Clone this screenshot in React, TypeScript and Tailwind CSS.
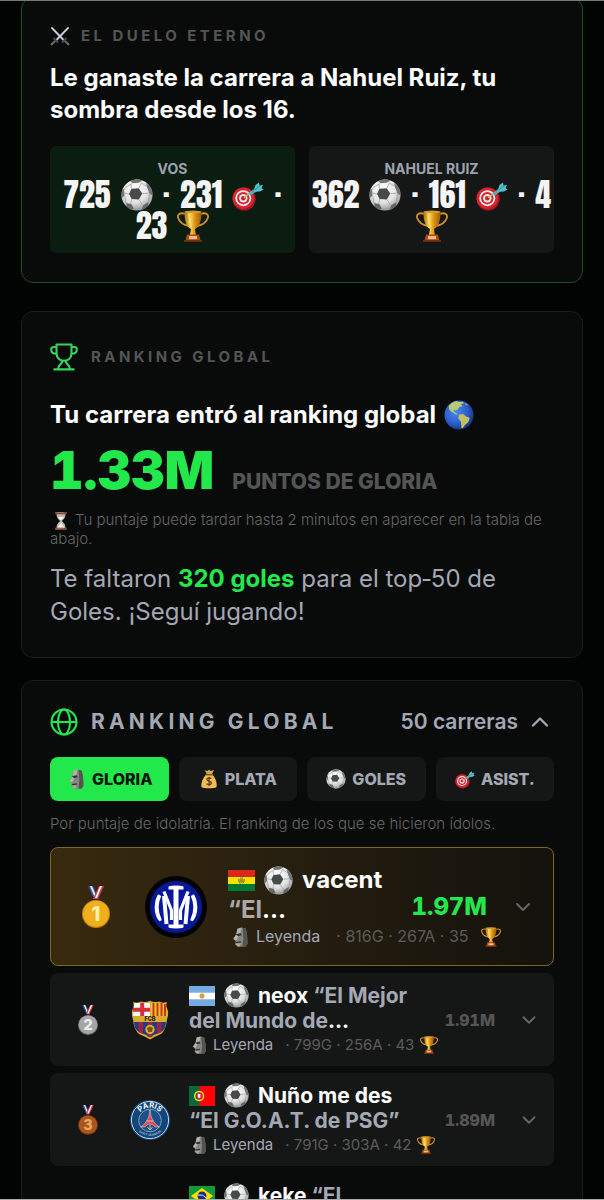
import { useId, useState, type ReactNode } from "react";
import { ChevronDown, ChevronUp } from "lucide-react";

type IconProps = { className?: string };

function Ball({ className = "" }: IconProps) {
  const id = useId();
  return (
    <svg viewBox="0 0 32 32" className={`inline-block shrink-0 ${className}`} role="img" aria-label="Goles">
      <defs>
        <radialGradient id={`${id}g`} cx="0.42" cy="0.3" r="0.75">
          <stop offset="0" stopColor="#ffffff" />
          <stop offset="0.6" stopColor="#e2e2e2" />
          <stop offset="1" stopColor="#8d8d8d" />
        </radialGradient>
        <clipPath id={`${id}c`}>
          <circle cx="16" cy="16" r="15.5" />
        </clipPath>
      </defs>
      <circle cx="16" cy="16" r="15.5" fill={`url(#${id}g)`} />
      <g clipPath={`url(#${id}c)`}>
        <path d="M10.500 9.800l7.200-.6 3.600 5.400-3.400 5.800-7.200-.4-2.700-5z" fill="#47494b" />
        <g fill="#707274">
          <path d="M9 1.500l8-2 5 2-4.500 2.300-6 .5z" />
          <path d="M25 4l7 5v8l-3.500-2.500L26 8z" />
          <path d="M0 9l3 1.500.5 6L0 20z" />
          <path d="M5 24l5.500 1.200L13 30l-6 2z" fill="#666" />
          <path d="M22 26.500l5.500-3.500-1 6-6 2.500z" fill="#666" />
        </g>
        <path
          d="M10.500 9.800L10 5M17.700 9.200L20.500 4M21.300 14.600l7-.5M17.900 20.400l4 6.100M10.700 20l-1 5M8 15l-4.500-1M20.500 4l5.500 3.500M11 4.500L5 8l-2 3M3.500 16.500L5 24M13 30l8-.5M28.500 15l-1 8"
          fill="none"
          stroke="#9a9a9a"
          strokeWidth="0.7"
        />
      </g>
    </svg>
  );
}

function Target({ className = "" }: IconProps) {
  return (
    <svg viewBox="0 0 32 32" className={`inline-block shrink-0 ${className}`} role="img" aria-label="Asistencias">
      <circle cx="12.200" cy="20" r="11.500" fill="#9f1620" />
      <circle cx="11.300" cy="19.200" r="10.800" fill="#d9232f" />
      <circle cx="11.300" cy="19.200" r="8" fill="#f3e9e8" />
      <circle cx="11.300" cy="19.200" r="6.200" fill="#d22733" />
      <circle cx="11.300" cy="19.200" r="4.200" fill="#f3e9e8" />
      <circle cx="11.300" cy="19.200" r="2.300" fill="#c92430" />
      <path d="M12 18.600l8-6" stroke="#d7b35a" strokeWidth="1.600" />
      <path d="M16.500 14.500l7.500-6 2 3-7.500 5z" fill="#3fb3c2" />
      <path d="M22 10.500L23.500 6l3.500-2.500.5 3 3.500-.6-1.500 3 2 1.600-3.500 2-5.500.3z" fill="#55c0cb" />
      <path d="M22.500 11l6-4.500" stroke="#23808f" strokeWidth="0.8" />
    </svg>
  );
}

function Cup({ className = "" }: IconProps) {
  const id = useId();
  return (
    <svg viewBox="0 0 32 32" className={`inline-block shrink-0 ${className}`} role="img" aria-label="Trofeos">
      <defs>
        <linearGradient id={id} x1="0" x2="1" y1="0" y2="0">
          <stop offset="0" stopColor="#b26e0a" />
          <stop offset="0.35" stopColor="#ffd54f" />
          <stop offset="0.6" stopColor="#dd9416" />
          <stop offset="1" stopColor="#9c5a06" />
        </linearGradient>
      </defs>
      <path d="M8.500 4C3 2 0 4.500 1.200 8c1.200 4 5.500 7 11 8M23.500 4c5.500-2 8.500.500 7.300 4-1.200 4-5.500 7-11 8" fill="none" stroke="#cf8f28" strokeWidth="1.800" />
      <path d="M7.500 1.500h17c.2 9-2 15.500-6.500 17.500l1 6h-6l1-6C9.500 17 7.300 10.500 7.500 1.500z" fill={`url(#${id})`} />
      <ellipse cx="16" cy="1.800" rx="8.500" ry="1.300" fill="#d99a2f" />
      <path d="M12 3.500c0 6 .8 10 2.500 13" stroke="#ffe98a" strokeWidth="1" fill="none" />
      <path d="M10 24.500h12l1.500 6h-15z" fill="#a94d12" />
      <path d="M7 30h18v1.800H7z" fill="#753008" />
      <rect x="12" y="26" width="8" height="3.200" fill="#f3b78b" />
    </svg>
  );
}

function Moai({ className = "" }: IconProps) {
  return (
    <svg viewBox="0 0 20 24" className={`inline-block shrink-0 ${className}`} role="img" aria-label="Gloria">
      <path d="M7 2l5-1.500L17 2l1.500 8 .5 10-2 3.500-9 .3L4 21l1-3.500L2 14l3-5z" fill="#858683" />
      <path d="M13 1l4 1 1.500 8 .5 10-2 3.500-4 .2 1-10z" fill="#53544f" />
      <path d="M7 2l5-1.500L10.500 7 6 8z" fill="#b2b2ac" />
      <path d="M5 9l6-1.500 1 2.500-5 1z" fill="#30312f" />
      <path d="M5.500 9.500L2 14.500l3.500 1.300L8 11z" fill="#b8b8b3" />
      <path d="M5 18l6-1 .5 1.500-6 1z" fill="#353633" />
      <path d="M4.500 20l6-.5-.5 3.500-3 .5z" fill="#a8a8a3" />
    </svg>
  );
}

function MoneyBag({ className = "" }: IconProps) {
  return (
    <svg viewBox="0 0 20 24" className={`inline-block shrink-0 ${className}`} aria-hidden="true">
      <path d="M5 1.500l3 1 2-1.500 2.500 1.500L16 1l-2.500 5.500h-6z" fill="#d7a44c" />
      <path d="M6.500 7h7.500c3.500 3 6 10 5 14.500-.5 2-17.500 2-18 0C0 17 3 10 6.500 7z" fill="#edbc55" />
      <path d="M6 6h9v1.800H6z" fill="#8a5722" />
      <path d="M13 11.500c-2-1.500-5.500-1-5.500 1.200 0 2.600 5.500 1.500 5.500 4.200 0 2.200-4 2.600-6 .8M10.200 9.500v11" fill="none" stroke="#5d3a0e" strokeWidth="1.500" />
    </svg>
  );
}

function Swords({ className = "" }: IconProps) {
  return (
    <svg viewBox="0 0 20 20" className={`inline-block shrink-0 ${className}`} aria-hidden="true">
      <path d="M1.500 1.500L14.500 15M18.500 1.500L5.500 15" stroke="#a4a6b4" strokeWidth="2.200" />
      <path d="M1.500 1.500L14.500 15M18.500 1.500L5.500 15" stroke="#eceef5" strokeWidth="0.900" />
      <path d="M3.500 12l4.500 4.500M16.500 12l-4.500 4.500" stroke="#4b4c52" strokeWidth="1.800" />
      <path d="M5 15l-4 4M15 15l4 4" stroke="#66676d" strokeWidth="2.200" />
    </svg>
  );
}

function Earth({ className = "" }: IconProps) {
  const id = useId();
  return (
    <svg viewBox="0 0 32 32" className={`inline-block shrink-0 ${className}`} aria-hidden="true">
      <defs>
        <radialGradient id={id} cx="0.4" cy="0.4" r="0.65">
          <stop offset="0" stopColor="#4b86ee" />
          <stop offset="0.6" stopColor="#2c5fcf" />
          <stop offset="1" stopColor="#173278" />
        </radialGradient>
      </defs>
      <circle cx="16" cy="16" r="15.500" fill={`url(#${id})`} />
      <path d="M5 6.500C7 3.500 10 1.800 13 1l3 1 4-.2 1.500 1.700-3.500.8 2 2.400-3.500.8-2 2.500-2.500 1.300-1-1-.8 1.700 3 2 1.800 1.400-2.500-.2-4.500-2.700L5.500 10z" fill="#b8cb74" />
      <path d="M16 15.500l4.500-.5 3 2.500 4 1.500-1.500 4.500-3.500 3-2.500 3.500-1.500-.5-.3-6-3-4z" fill="#c5bf5f" />
      <path d="M22 2.800l4 2.500-2.500.2z" fill="#a9c27a" />
    </svg>
  );
}

function Hourglass({ className = "" }: IconProps) {
  return (
    <svg viewBox="0 0 16 20" className={`inline-block shrink-0 ${className}`} aria-hidden="true">
      <path d="M3 2h10c0 4-1.500 6-4 8 2.500 2 4 4 4 8H3c0-4 1.500-6 4-8-2.500-2-4-4-4-8z" fill="#b9b5b2" />
      <path d="M4.500 5.500h7L8.500 9h-1zM8 11.500l4.500 6.500h-9z" fill="#fff3e6" />
      <path d="M1.500 0h13v2.600h-13zM1.500 17.400h13V20h-13z" fill="#7a4a38" />
      <path d="M3 .6h8M3 18h8" stroke="#b98471" strokeWidth="0.800" />
    </svg>
  );
}

function Medal({ place, className = "" }: { place: number; className?: string }) {
  const tones = [
    ["#f0b01c", "#c47f05", "#fff0a8"],
    ["#a4a5a7", "#6d6f72", "#ececec"],
    ["#a8551f", "#70310c", "#f0a45e"],
  ][place - 1];
  return (
    <svg viewBox="0 0 28 42" className={`shrink-0 ${className}`} role="img" aria-label={`Puesto ${place}`}>
      <path d="M6 0h5l6 13h-5z" fill="#3656a4" />
      <path d="M8 0h2l5 12h-2z" fill="#e9e9f2" />
      <path d="M22 0h-5l-6 13h5z" fill="#d23a4b" />
      <path d="M20 0h-2l-5 12h2z" fill="#f3f0f3" />
      <circle cx="14" cy="28" r="14" fill={tones[1]} />
      <circle cx="14" cy="27.700" r="13" fill={tones[0]} />
      <text x="14" y="35" textAnchor="middle" fontSize="20" fontWeight="800" fill={tones[2]} className="font-['Inter',sans-serif]">
        {place}
      </text>
    </svg>
  );
}

type Country = "bo" | "ar" | "pt" | "br";

function Flag({ country, className = "" }: { country: Country; className?: string }) {
  return (
    <svg viewBox="0 0 27 20" preserveAspectRatio="none" className={`inline-block shrink-0 ${className}`} role="img" aria-label={country}>
      {country === "bo" && (
        <>
          <path d="M0 0h27v7H0z" fill="#da291c" />
          <path d="M0 6.700h27v7H0z" fill="#f4e400" />
          <path d="M0 13.400h27V20H0z" fill="#007a33" />
          <ellipse cx="13.500" cy="10" rx="2" ry="2.300" fill="#a98a35" />
          <path d="M10.800 8.500q-.500 3 1.500 4.300M16.200 8.500q.500 3-1.500 4.300M12 7l1.500-1.300L15 7" stroke="#6b5b22" fill="none" strokeWidth="0.900" />
        </>
      )}
      {country === "ar" && (
        <>
          <path d="M0 0h27v20H0z" fill="#74acdf" />
          <path d="M0 6.700h27v6.600H0z" fill="#fff" />
          <circle cx="13.500" cy="10" r="2.300" fill="#e3a52c" stroke="#a37022" strokeWidth="0.500" />
        </>
      )}
      {country === "pt" && (
        <>
          <path d="M0 0h27v20H0z" fill="#f00" />
          <path d="M0 0h10.800v20H0z" fill="#046a38" />
          <circle cx="10.500" cy="10" r="4.600" fill="none" stroke="#f3e02c" strokeWidth="1.500" />
          <path d="M8 7h5v4.500q-2.500 4-5 0z" fill="#e8283a" />
          <path d="M9.200 8h2.600v3q-1.300 2-2.600 0z" fill="#fff" />
        </>
      )}
      {country === "br" && (
        <>
          <path d="M0 0h27v20H0z" fill="#109a3a" />
          <path d="M13.500 2L25 10l-11.500 8L2 10z" fill="#fedf00" />
          <circle cx="13.500" cy="10" r="4.600" fill="#1b2a7a" />
          <path d="M9.200 9q5-1 8.500 2.600" stroke="#fff" strokeWidth="0.900" fill="none" />
        </>
      )}
    </svg>
  );
}

function InterCrest({ className = "" }: IconProps) {
  const id = useId();
  return (
    <svg viewBox="0 0 62 62" className={className} role="img" aria-label="Inter">
      <clipPath id={id}>
        <circle cx="31" cy="31" r="22" />
      </clipPath>
      <circle cx="31" cy="31" r="31" fill="#020204" />
      <circle cx="31" cy="31" r="26" fill="#08189a" />
      <g clipPath={`url(#${id})`} fill="none" stroke="#fff">
        <path d="M31 10v42" strokeWidth="5" />
        <path d="M23.500 11.500h15M23.500 50.500h15" strokeWidth="4" />
        <path d="M21.500 48L19 20M40.500 48L43 20" strokeWidth="4" />
        <path d="M19 15.500L26.500 34.500V44M43 15.500L35.500 34.500V44" strokeWidth="3.200" />
        <path d="M14.500 19q-6 12 .5 26M47.500 19q6 12-.5 26" strokeWidth="4" />
      </g>
    </svg>
  );
}

function BarcaCrest({ className = "" }: IconProps) {
  const id = useId();
  return (
    <svg viewBox="0 0 40 40" className={className} role="img" aria-label="Barcelona">
      <clipPath id={id}>
        <path d="M3 2q5 1.500 8-.500 5 1.500 9-.8 4 2.300 9 .8 3 2 8 .5-1.500 4 .500 7.500 1.500 4-.5 10Q36 30 31 34q-6 2.500-11 5.500Q15 36.500 9 34 4 30 3 19.500q-2-6-.5-10Q4.500 6 3 2z" />
      </clipPath>
      <g clipPath={`url(#${id})`}>
        <path d="M0 0h40v40H0z" fill="#d8ad2d" />
        <path d="M4.500 3H20v13H3z" fill="#fff" />
        <path d="M10.200 3h4v13h-4zM3 7.700h17v4H3z" fill="#d52f3c" />
        <path d="M21 3h14.500L37 16H21z" fill="#f2c322" />
        <path d="M22.500 3h2v13h-2zM26.500 3h2v13h-2zM30.500 3h2v13h-2zM34 4h2v12h-2z" fill="#c7342f" />
        <path d="M4 22h32q0 8-6 10.500-5 1.500-10 5-5-3.500-10-5Q4 30 4 22z" fill="#1c3d8c" />
        <path d="M8.500 22H13v12l-4.500-2zM17.800 22h4.500v15h-4.500zM27 22h4.500v10L27 34z" fill="#a3213f" />
        <circle cx="20" cy="29.500" r="4.700" fill="#e0a927" />
        <path d="M17 28l3-1.500 3 1.500-1.200 4h-3.600z" fill="#73551b" />
      </g>
      <text x="20" y="21" textAnchor="middle" fontSize="5.500" fontWeight="800" fill="#25200d" className="font-['Inter',sans-serif]">
        FCB
      </text>
    </svg>
  );
}

function PsgCrest({ className = "" }: IconProps) {
  const id = useId();
  return (
    <svg viewBox="0 0 40 40" className={className} role="img" aria-label="Paris Saint-Germain">
      <defs>
        <path id={`${id}t`} d="M7.700 20a12.300 12.300 0 0 1 24.600 0" />
        <path id={`${id}b`} d="M4 20a16 16 0 0 0 32 0" />
      </defs>
      <circle cx="20" cy="20" r="20" fill="#124678" />
      <circle cx="20" cy="20" r="18.600" fill="none" stroke="#c3d8e8" strokeWidth="1" />
      <circle cx="20" cy="20.500" r="11.300" fill="#1a5288" stroke="#a5c0d6" strokeWidth="0.700" />
      <path d="M20 10q.500 8 4 12 3 4 5.500 5h-4.500Q23 24 20 24t-5 3h-4.500Q13 26 16 22q3.500-4 4-12z" fill="#e0455a" stroke="#f0dfe4" strokeWidth="0.500" />
      <path d="M16.500 21h7" stroke="#f0dfe4" strokeWidth="0.700" />
      <path d="M20 25v5M17.500 27q2.500 5 5 0" stroke="#d9c98a" strokeWidth="0.900" fill="none" />
      <text fontSize="7.500" fontWeight="700" fill="#f1f6fa" textAnchor="middle" className="font-['Inter',sans-serif]">
        <textPath href={`#${id}t`} startOffset="50%">PARIS</textPath>
      </text>
      <text fontSize="3" fontWeight="600" fill="#9fb8cc" textAnchor="middle" className="font-['Inter',sans-serif]">
        <textPath href={`#${id}b`} startOffset="50%">SAINT-GERMAIN</textPath>
      </text>
    </svg>
  );
}

function TrophyOutline({ className = "" }: IconProps) {
  return (
    <svg viewBox="0 0 28 28" fill="none" stroke="currentColor" strokeWidth="2.100" strokeLinejoin="round" className={className} aria-hidden="true">
      <path d="M6.500 1.500h15v8.500c0 4.800-3.200 7.800-7.500 7.800S6.500 14.800 6.500 10z" />
      <path d="M6.500 4H3.800C2 4 1.200 5 1.200 6.500c0 2.500 2 4.300 5.300 4.300M21.500 4h2.700c1.800 0 2.600 1 2.600 2.500 0 2.500-2 4.300-5.300 4.300" />
      <path d="M12.500 17.800c0 3.200-4.500 3.700-4.500 8.200M15.500 17.800c0 3.200 4.500 3.700 4.500 8.200M3.500 26.400h21" />
    </svg>
  );
}

function GlobeOutline({ className = "" }: IconProps) {
  return (
    <svg viewBox="0 0 28 28" fill="none" stroke="currentColor" strokeWidth="2.100" className={className} aria-hidden="true">
      <circle cx="14" cy="14" r="12.500" />
      <ellipse cx="14" cy="14" rx="6" ry="12.500" />
      <path d="M1.500 14h25" />
    </svg>
  );
}

function DuelBox({ name, winner, children }: { name: string; winner?: boolean; children: ReactNode }) {
  return (
    <div className={`flex flex-col items-center rounded-md py-3 text-center ${winner ? "bg-[#0b1d10]" : "bg-[#151716]"}`}>
      <span className="text-[14px] leading-[21px] font-bold text-[#9ca3af]">{name}</span>
      <div className="font-['Anton','Liberation_Sans_Narrow',sans-serif] text-[32px] leading-[31px] whitespace-nowrap text-[#f5f5f5]">
        {children}
      </div>
    </div>
  );
}

function StatLine({ children }: { children: ReactNode }) {
  return <div className="flex h-[31px] items-center justify-center gap-2.5">{children}</div>;
}

const tabs = [
  { id: "gloria", label: "GLORIA", icon: <Moai className="size-5" /> },
  { id: "plata", label: "PLATA", icon: <MoneyBag className="size-5" /> },
  { id: "goles", label: "GOLES", icon: <Ball className="size-5" /> },
  { id: "asist", label: "ASIST.", icon: <Target className="size-5" /> },
];

type Career = {
  place: number;
  country: Country;
  name: string;
  quoteStart?: string;
  quoteEnd: string;
  clipped?: boolean;
  stats: string;
  score: string;
  crest: ReactNode;
};

const careers: Career[] = [
  { place: 2, country: "ar", name: "neox", quoteStart: "“El Mejor", quoteEnd: "del Mundo de", clipped: true, stats: "799G · 256A · 43", score: "1.91M", crest: <BarcaCrest className="size-10 shrink-0" /> },
  { place: 3, country: "pt", name: "Nuño me des", quoteEnd: "“El G.O.A.T. de PSG”", stats: "791G · 303A · 42", score: "1.89M", crest: <PsgCrest className="size-10 shrink-0" /> },
];

function Meta({ stats, large }: { stats: string; large?: boolean }) {
  return (
    <div className={`flex items-center leading-[23px] whitespace-nowrap text-[#5c5c5c] ${large ? "text-[16px]" : "text-[15px]"}`}>
      <Moai className={large ? "mr-1 h-5 w-6" : "mr-1 h-[18px] w-5"} />
      <span className="text-[#a4a8b4]">Leyenda</span>
      <span className={large ? "ml-4" : "ml-3"}>· {stats}</span>
      <Cup className={large ? "ml-3 size-5" : "ml-1.5 size-[18px]"} />
    </div>
  );
}

function CareerRow({ career }: { career: Career }) {
  return (
    <button className="flex w-full items-center rounded-lg bg-[#151716] py-[10px] pr-[14px] pl-7 text-left">
      <Medal place={career.place} className="h-[30px] w-5" />
      <span className="ml-8">{career.crest}</span>
      <div className="ml-[19px] min-w-0 flex-1">
        <div className="text-[21px] leading-[25px] font-bold whitespace-nowrap text-white">
          <div className="flex items-center gap-[9px]">
            <Flag country={career.country} className="h-5 w-[26px]" />
            <Ball className="size-[25px]" />
            <span>
              {career.name} <span className="text-[#a4a8b4]">{career.quoteStart}</span>
            </span>
          </div>
          <div>
            <span className="text-[#a4a8b4]">{career.quoteEnd}</span>
            {career.clipped && "…"}
          </div>
        </div>
        <Meta stats={career.stats} />
      </div>
      <span className="text-[16px] font-extrabold text-[#555] tabular-nums">{career.score}</span>
      <ChevronDown className="ml-[23px] size-[22px] text-[#666]" strokeWidth={2} />
    </button>
  );
}

export default function App() {
  const [tab, setTab] = useState("gloria");
  const [open, setOpen] = useState(true);

  return (
    <div className="flex h-screen flex-col border-t border-b border-t-[#777] border-b-[#aaa] bg-[#020303] font-['Inter',sans-serif] text-white">
      <main className="min-h-0 flex-1 overflow-hidden px-[21px]">
        <section className="-mt-1 rounded-xl border border-[#17521f] bg-[#090b0a] px-7 pt-7 pb-[29px]">
          <div className="flex h-5 items-center gap-[11px] text-[15px] font-bold tracking-[0.23em] text-[#555]">
            <Swords className="size-5" />
            <span>EL DUELO ETERNO</span>
          </div>
          <h2 className="mt-4 text-[24px] leading-8 font-bold">Le ganaste la carrera a Nahuel Ruiz, tu sombra desde los 16.</h2>
          <div className="mt-5 grid grid-cols-2 gap-[14px]">
            <DuelBox name="VOS" winner>
              <StatLine>
                <span>725</span>
                <Ball className="size-8" />
                <span>·</span>
                <span>231</span>
                <Target className="size-8" />
                <span>·</span>
              </StatLine>
              <StatLine>
                <span>23</span>
                <Cup className="size-8" />
              </StatLine>
            </DuelBox>
            <DuelBox name="NAHUEL RUIZ">
              <StatLine>
                <span>362</span>
                <Ball className="size-8" />
                <span>·</span>
                <span>161</span>
                <Target className="size-8" />
                <span>·</span>
                <span>4</span>
              </StatLine>
              <StatLine>
                <Cup className="size-8" />
              </StatLine>
            </DuelBox>
          </div>
        </section>

        <section className="mt-7 rounded-xl border border-[#1b1d1c] bg-[#090b0a] px-7 pt-[31px] pb-[29px]">
          <div className="flex h-7 items-center gap-[13px]">
            <TrophyOutline className="size-7 text-[#33d65c]" />
            <span className="text-[15px] font-bold tracking-[0.23em] text-[#555]">RANKING GLOBAL</span>
          </div>
          <h2 className="mt-7 flex items-center gap-2 text-[24px] leading-8 font-bold">
            Tu carrera entró al ranking global
            <Earth className="size-[30px]" />
          </h2>
          <p className="mt-2 flex items-baseline gap-[18px]">
            <span className="text-[52px] leading-[64px] font-black text-[#22e84b] tabular-nums">1.33M</span>
            <span className="text-[21px] font-extrabold text-[#555]">PUNTOS DE GLORIA</span>
          </p>
          <p className="mt-[7px] text-[15px] leading-[19px] font-light text-[#666]">
            <Hourglass className="-my-1 mr-1.5 ml-[3px] h-[18px] w-4 align-middle" />
            Tu puntaje puede tardar hasta 2 minutos en aparecer en la tabla de abajo.
          </p>
          <p className="mt-[14px] text-[24px] leading-[33px] text-[#a4a8b4]">
            Te faltaron <strong className="font-bold text-[#22e84b]">320 goles</strong> para el top‑50 de Goles. ¡Seguí jugando!
          </p>
        </section>

        <section className="mt-[22px] rounded-xl border border-[#1b1d1c] bg-[#090b0a] px-7 pt-[26px] pb-7">
          <button className="flex w-full items-center text-[21px] leading-[30px] text-[#a4a8b4]" aria-expanded={open} onClick={() => setOpen(!open)}>
            <GlobeOutline className="size-7 text-[#22e84b]" />
            <span className="ml-[13px] font-bold tracking-[0.2em]">RANKING GLOBAL</span>
            <span className="ml-auto font-semibold">50 carreras</span>
            {open ? <ChevronUp className="ml-2 size-7" strokeWidth={2} /> : <ChevronDown className="ml-2 size-7" strokeWidth={2} />}
          </button>
          {open && (
            <>
              <div className="mt-5 grid grid-cols-4 gap-2.5">
                {tabs.map((t) => (
                  <button
                    key={t.id}
                    onClick={() => setTab(t.id)}
                    className={`flex h-11 items-center justify-center gap-1.5 rounded-lg text-[16px] font-extrabold ${tab === t.id ? "bg-[#22e84b] text-[#06130a]" : "bg-[#151716] text-[#a4a8b4]"}`}
                  >
                    {t.icon}
                    {t.label}
                  </button>
                ))}
              </div>
              <p className="mt-[13px] text-[15px] leading-[19px] font-light text-[#666]">Por puntaje de idolatría. El ranking de los que se hicieron ídolos.</p>
              <div className="mt-[14px] flex flex-col gap-[7px]">
                <button className="flex w-full items-center rounded-lg border border-[#80671f] bg-linear-to-r from-[#382a0e] to-[#14120d] py-[17px] pr-[18px] pl-[31px] text-left">
                  <Medal place={1} className="h-[42px] w-7" />
                  <InterCrest className="ml-[35px] size-[62px] shrink-0" />
                  <div className="ml-[21px] min-w-0 flex-1">
                    <div className="text-[24px] leading-[30px] font-bold whitespace-nowrap">
                      <div className="flex items-center gap-[9px]">
                        <Flag country="bo" className="h-[21px] w-[27px]" />
                        <Ball className="size-[29px]" />
                        <span>vacent</span>
                      </div>
                      <div>
                        <span className="text-[#aaa8a8]">“El</span>…
                      </div>
                    </div>
                    <Meta stats="816G · 267A · 35" large />
                  </div>
                  <span className="text-[24px] font-extrabold text-[#22e84b] tabular-nums">1.97M</span>
                  <ChevronDown className="ml-6 size-6 text-[#666]" strokeWidth={2} />
                </button>
                {careers.map((c) => (
                  <CareerRow key={c.place} career={c} />
                ))}
                <div className="flex items-center gap-[9px] py-[10px] pl-[139px] text-[21px] leading-[25px] font-bold">
                  <Flag country="br" className="h-5 w-[26px]" />
                  <Ball className="size-[25px]" />
                  <span>
                    keke <span className="text-[#a4a8b4]">“El</span>
                  </span>
                </div>
              </div>
            </>
          )}
        </section>
      </main>
    </div>
  );
}
